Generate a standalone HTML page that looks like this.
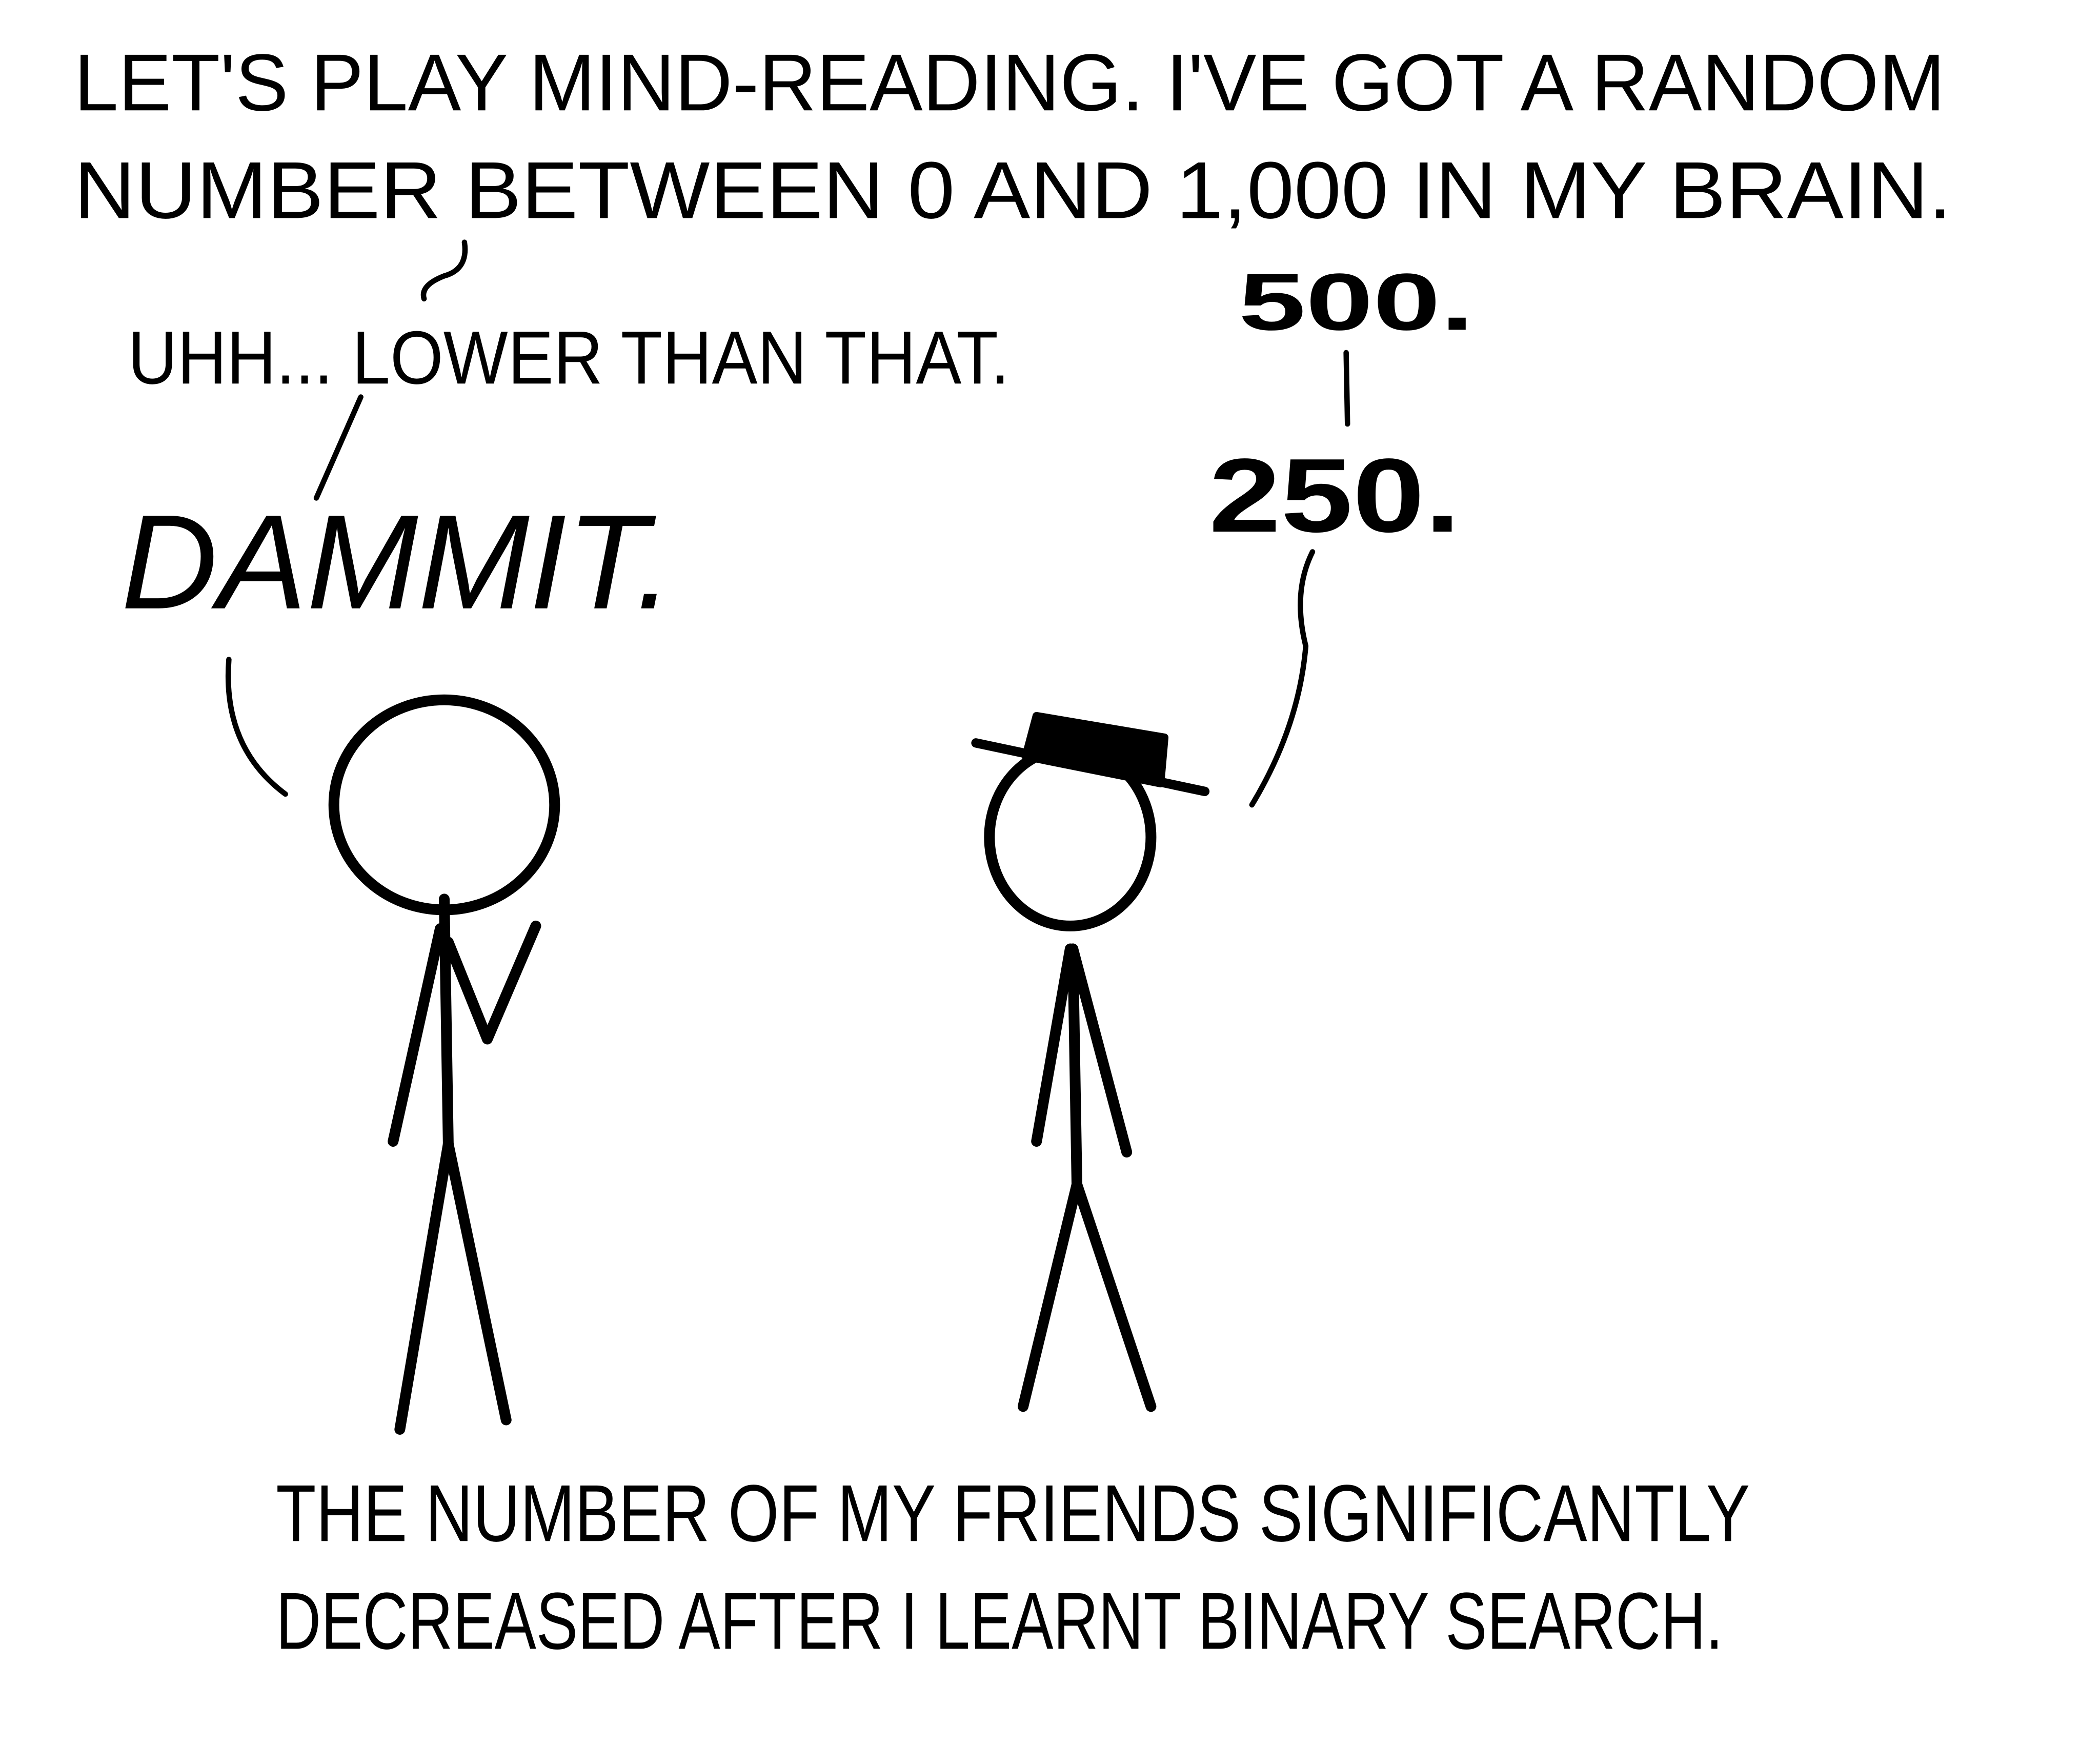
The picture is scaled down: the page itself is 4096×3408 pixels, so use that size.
<!DOCTYPE html>
<html><head><meta charset="utf-8">
<style>
html,body{margin:0;padding:0;background:#fff;}
svg{display:block;}
text{font-family:"Liberation Sans",sans-serif;fill:#000;}
</style></head>
<body>
<svg width="4096" height="3408" viewBox="0 0 1560 1298" xmlns="http://www.w3.org/2000/svg">
<rect width="1560" height="1298" fill="#fff"/>
<g font-size="60">
<text x="55" y="82" textLength="1390" lengthAdjust="spacingAndGlyphs">LET'S PLAY MIND-READING. I'VE GOT A RANDOM</text>
<text x="55" y="162" textLength="1395" lengthAdjust="spacingAndGlyphs">NUMBER BETWEEN  0  AND  1,000  IN MY BRAIN.</text>
<text x="95" y="285" font-size="56" textLength="655" lengthAdjust="spacingAndGlyphs">UHH... LOWER THAN THAT.</text>
<text x="920" y="245" font-size="60" font-weight="bold" textLength="175" lengthAdjust="spacingAndGlyphs">500.</text>
<text x="898" y="395" font-size="78" font-weight="bold" textLength="187" lengthAdjust="spacingAndGlyphs">250.</text>
<text x="90" y="452" font-size="100" font-style="italic" textLength="410" lengthAdjust="spacingAndGlyphs">DAMMIT.</text>
<text x="205" y="1145" textLength="1095" lengthAdjust="spacingAndGlyphs">THE NUMBER OF MY FRIENDS SIGNIFICANTLY</text>
<text x="205" y="1225" textLength="1075" lengthAdjust="spacingAndGlyphs">DECREASED AFTER I LEARNT BINARY SEARCH.</text>
</g>
<g fill="none" stroke="#000" stroke-linecap="round" stroke-linejoin="round">
<path d="M345 180 Q348 200 330 205 Q312 212 315 222" stroke-width="4"/>
<path d="M1000 262 L1001 315" stroke-width="4"/>
<path d="M268 295 L235 370" stroke-width="4"/>
<path d="M170 490 Q165 555 212 590" stroke-width="4"/>
<path d="M975 410 Q960 440 970 480 Q965 540 930 598" stroke-width="4"/>
<g stroke-width="8">
<ellipse cx="330" cy="598" rx="82" ry="78"/>
<path d="M330 668 L333 850"/>
<path d="M333 850 L297 1062"/>
<path d="M333 850 L376 1055"/>
<path d="M327 690 L292 848"/>
<path d="M333 700 L362 772 L398 688"/>
<ellipse cx="795" cy="622" rx="60" ry="66"/>
<path d="M797 705 L800 880"/>
<path d="M795 705 L770 848"/>
<path d="M797 705 L837 856"/>
<path d="M800 880 L760 1045"/>
<path d="M800 880 L855 1045"/>
<path d="M725 552 L895 588" stroke-width="7"/>
</g>
<path d="M770 532 L865 548 L862 582 L762 562 Z" fill="#000" stroke-width="6"/>
</g>
</svg>
</body></html>
